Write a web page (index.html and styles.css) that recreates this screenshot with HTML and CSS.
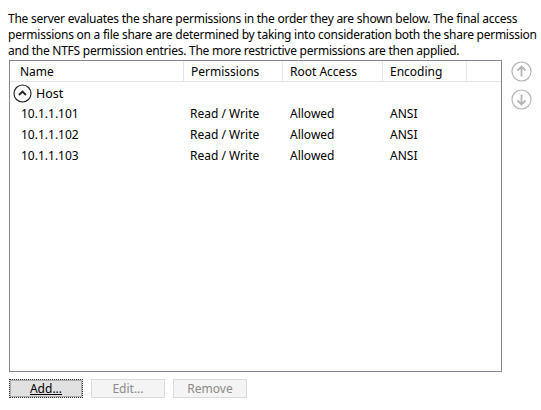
FILE: index.html
```html
<!DOCTYPE html>
<html>
<head>
<meta charset="utf-8">
<link rel="stylesheet" href="styles.css">
</head>
<body>
<div class="page">
  <p class="intro">The server evaluates the share permissions in the order they are shown below. The final access permissions on a file share are determined by taking into consideration both the share permission and the NTFS permission entries. The more restrictive permissions are then applied.</p>
  <div class="main">
    <div class="list">
      <div class="header">
        <div class="hcell c1">Name</div>
        <div class="hcell c2">Permissions</div>
        <div class="hcell c3">Root Access</div>
        <div class="hcell c4">Encoding</div>
        <div class="hcell c5"></div>
      </div>
      <div class="group">
        <svg class="chev" width="19" height="19" viewBox="0 0 19 19"><circle cx="9.5" cy="9.5" r="8.5" fill="none" stroke="#222" stroke-width="1.2"/><path d="M6 11 L9.5 7.5 L13 11" fill="none" stroke="#222" stroke-width="1.8"/></svg>
        <span>Host</span>
      </div>
      <div class="row"><div class="cell c1">10.1.1.101</div><div class="cell c2">Read / Write</div><div class="cell c3">Allowed</div><div class="cell c4">ANSI</div></div>
      <div class="row"><div class="cell c1">10.1.1.102</div><div class="cell c2">Read / Write</div><div class="cell c3">Allowed</div><div class="cell c4">ANSI</div></div>
      <div class="row"><div class="cell c1">10.1.1.103</div><div class="cell c2">Read / Write</div><div class="cell c3">Allowed</div><div class="cell c4">ANSI</div></div>
    </div>
    <div class="side">
      <svg width="21" height="21" viewBox="0 0 21 21"><circle cx="10.5" cy="10.5" r="9.5" fill="none" stroke="#b5b5b5" stroke-width="1.2"/><path d="M10.5 15.5 V5.5 M6.5 9.5 L10.5 5.5 L14.5 9.5" fill="none" stroke="#b5b5b5" stroke-width="1.8"/></svg>
      <svg width="21" height="21" viewBox="0 0 21 21"><circle cx="10.5" cy="10.5" r="9.5" fill="none" stroke="#b5b5b5" stroke-width="1.2"/><path d="M10.5 5.5 V15.5 M6.5 11.5 L10.5 15.5 L14.5 11.5" fill="none" stroke="#b5b5b5" stroke-width="1.8"/></svg>
    </div>
  </div>
  <div class="buttons">
    <button class="btn focus"><span>Add...</span></button>
    <button class="btn disabled">Edit...</button>
    <button class="btn disabled">Remove</button>
  </div>
</div>
</body>
</html>
```

FILE: styles.css
```css
html, body {
  margin: 0;
  padding: 0;
  background: #fff;
}
body {
  font-family: "Segoe UI", "Noto Sans", sans-serif;
  font-size: 12px;
  color: #000;
}
.page {
  padding: 11px 0 0 8px;
}
.intro {
  margin: 0;
  width: 530px;
  line-height: 16px;
  letter-spacing: -0.25px;
}
.main {
  display: flex;
  gap: 9px;
  margin-top: 1px;
}
.list {
  width: 493px;
  height: 312px;
  border: 1px solid #828790;
  margin-left: 1px;
  box-sizing: border-box;
  background: #fff;
}
.header {
  display: flex;
  height: 20px;
  border-bottom: 1px solid #e5e5e5;
  margin-left: 1px;
}
.hcell {
  line-height: 19px;
  padding-top: 1px;
  padding-left: 7px;
  border-right: 1px solid #e5e5e5;
  box-sizing: border-box;
  white-space: nowrap;
}
.header .c1 { padding-left: 9px; }
.c1 { width: 173px; }
.c2 { width: 99px; }
.c3 { width: 100px; }
.c4 { width: 84px; }
.c5 { width: 32px; border-right: none; }
.cell {
  box-sizing: border-box;
  white-space: nowrap;
}
.row .c1 { padding-left: 10px; }
.row .c2 { padding-left: 6px; }
.row .c3 { padding-left: 7px; }
.row .c4 { padding-left: 7px; }
.group {
  display: flex;
  align-items: center;
  gap: 4px;
  height: 21px;
  margin-top: 1px;
  padding-left: 3px;
}
.group span { font-size: 12.5px; }
.chev { display: block; }
.row {
  display: flex;
  height: 21px;
  line-height: 20px;
  margin-left: 1px;
}
.side {
  display: flex;
  flex-direction: column;
  gap: 7px;
  padding-top: 1px;
}
.side svg { display: block; }
.buttons {
  display: flex;
  gap: 8px;
  margin-top: 7px;
  margin-left: 1px;
}
.btn {
  width: 74px;
  height: 19px;
  box-sizing: border-box;
  font-family: "Segoe UI", "Noto Sans", sans-serif;
  font-size: 12px;
  padding: 0;
  line-height: 16px;
  background: #e1e1e1;
  border: 1px solid #adadad;
  color: #000;
}
.btn.focus {
  border: 1px dotted #333;
  outline: 1px solid #adadad;
  outline-offset: -2px;
}
.btn.focus span {
  text-decoration: underline;
  text-underline-offset: 1px;
}
.btn.disabled {
  background: #f4f4f4;
  border: 1px solid #dadada;
  color: #8a8a8a;
}
```
